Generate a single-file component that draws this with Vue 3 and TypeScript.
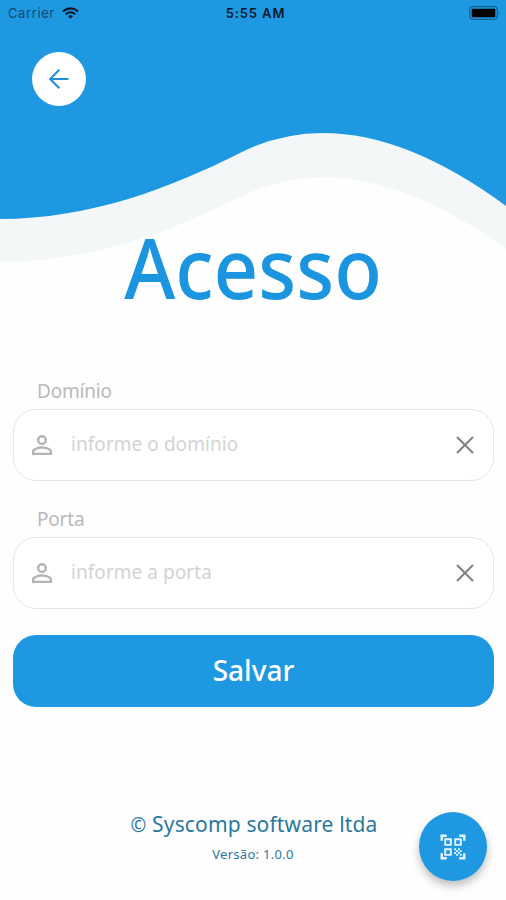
<script setup lang="ts">
import { ref } from 'vue'

interface Field {
  id: string
  label: string
  placeholder: string
}

const fields: Field[] = [
  { id: 'dominio', label: 'Domínio', placeholder: 'informe o domínio' },
  { id: 'porta', label: 'Porta', placeholder: 'informe a porta' },
]
const values = ref<Record<string, string>>({ dominio: '', porta: '' })
</script>

<template>
  <main class="screen">
    <svg class="wave" width="506" height="270" viewBox="0 0 506 270" aria-hidden="true">
      <path fill="#f3f7f8" d="M0 0H506V249Q356 140 240 197C170 232 90 262 0 262Z" />
      <path fill="#1f98e2" d="M0 0H506V206Q355 95 240 153C170 188 90 219 0 219Z" />
    </svg>

    <header class="status">
      <div class="carrier">
        <span>Carrier</span>
        <svg width="17" height="12" viewBox="0 0 17 12" fill="none" stroke="#07192a" stroke-width="2">
          <path d="M1 4.400Q8.500-1.700 16 4.400" />
          <path d="M3.700 7.200Q8.500 3.300 13.300 7.200" />
          <path d="M8.500 11.700L6 9.200Q8.500 7.300 11 9.200Z" fill="#07192a" stroke="none" />
        </svg>
      </div>
      <span class="time">5:55 AM</span>
      <svg class="battery" width="32" height="14" viewBox="0 0 32 14">
        <rect x=".7" y=".7" width="27.600" height="12.600" rx="3.200" fill="none" stroke="#14608f" stroke-width="1.200" />
        <rect x="2.700" y="2.700" width="23.600" height="8.600" rx="1" fill="#000" />
        <path d="M29.700 5Q31.300 7 29.700 9Z" fill="#14608f" />
      </svg>
    </header>

    <button class="back" aria-label="Voltar">
      <svg width="28" height="28" viewBox="0 0 28 28" fill="none" stroke="#1f8fd6" stroke-width="2">
        <path d="M23.500 14H5.500M14.300 4.800L5.100 14L14.300 23.200" />
      </svg>
    </button>

    <h1 class="title">Acesso</h1>

    <form class="form" @submit.prevent>
      <div v-for="f in fields" :key="f.id" class="group">
        <label class="label" :for="f.id">{{ f.label }}</label>
        <div class="field">
          <svg width="30" height="30" viewBox="0 0 24 24" fill="#b5b5b5">
            <path d="M12 5.900a2.100 2.100 0 1 1 0 4.200 2.100 2.100 0 0 1 0-4.200m0 9c2.970 0 6.100 1.460 6.100 2.100v1.100H5.900V17c0-.64 3.130-2.100 6.100-2.100M12 4C9.790 4 8 5.790 8 8s1.790 4 4 4 4-1.790 4-4-1.790-4-4-4zm0 9c-2.670 0-8 1.340-8 4v3h16v-3c0-2.660-5.330-4-8-4z" />
          </svg>
          <input :id="f.id" v-model="values[f.id]" class="input" :placeholder="f.placeholder" />
          <svg class="clear" width="18" height="18" viewBox="0 0 18 18" stroke="#808080" stroke-width="2" @click="values[f.id] = ''">
            <path d="M1 1L17 17M17 1L1 17" />
          </svg>
        </div>
      </div>
      <button class="save" type="submit">Salvar</button>
    </form>

    <footer class="footer">
      <p class="company"><span class="copy">©</span> Syscomp software ltda</p>
      <p class="version">Versão: 1.0.0</p>
    </footer>

    <button class="fab" aria-label="QR">
      <svg width="30" height="30" viewBox="0 0 24 24" fill="#e6f4fd">
        <path d="M9.500 6.500v3h-3v-3h3M11 5H5v6h6V5zm-1.500 9.500v3h-3v-3h3M11 13H5v6h6v-6zm6.500-6.500v3h-3v-3h3M19 5h-6v6h6V5zm-6 8h1.500v1.500H13V13zm1.500 1.500H16V16h-1.500v-1.500zM16 13h1.500v1.500H16V13zm-3 3h1.500v1.500H13V16zm1.500 1.500H16V19h-1.500v-1.500zM16 16h1.500v1.500H16V16zm1.500-1.500H19V16h-1.500v-1.500zm0 3H19V19h-1.500v-1.500zM22 7h-2V4h-3V2h5v5zm0 15v-5h-2v3h-3v2h5zM2 22h5v-2H4v-3H2v5zM2 2v5h2V4h3V2H2z" />
      </svg>
    </button>
  </main>
</template>

<style>
body {
  margin: 0;
  background: #fff;
}
</style>

<style scoped>
.screen {
  position: relative;
  box-sizing: border-box;
  width: 506px;
  height: 900px;
  overflow: hidden;
  background: #fefefe;
  font-family: "Noto Sans", "Open Sans", sans-serif;
}
.wave {
  position: absolute;
  top: 0;
  left: 0;
}
button {
  border: 0;
  padding: 0;
  font-family: inherit;
}
.status {
  position: relative;
  display: grid;
  grid-template-columns: 1fr auto 1fr;
  align-items: center;
  height: 26px;
  padding: 0 5px 0 8px;
  font-family: Inter, "Liberation Sans", sans-serif;
  font-size: 13px;
  color: #07192a;
}
.carrier {
  display: flex;
  align-items: center;
  gap: 7px;
  color: #14496f;
  letter-spacing: 0.6px;
}
.time {
  font-weight: 600;
  letter-spacing: 0.9px;
  padding-left: 2px;
}
.battery {
  justify-self: end;
}
.back {
  position: relative;
  display: flex;
  align-items: center;
  justify-content: center;
  width: 54px;
  height: 54px;
  margin: 26px 0 0 32px;
  border-radius: 50%;
  background: #fff;
}
.title {
  position: relative;
  margin: 111px 0 0;
  height: 100px;
  line-height: 100px;
  text-align: center;
  font-size: 83px;
  font-weight: 500;
  color: #1b95e0;
  transform: scaleX(0.94);
}
.form {
  display: flex;
  flex-direction: column;
  padding: 61px 12px 0 13px;
}
.group {
  height: 128px;
}
.label {
  display: block;
  height: 31px;
  line-height: 26px;
  padding-left: 24px;
  font-size: 19px;
  letter-spacing: -0.2px;
  color: #b9b9b9;
}
.field {
  box-sizing: border-box;
  display: flex;
  align-items: center;
  height: 72px;
  padding: 0 19px 0 13px;
  border: 1.500px solid #e5e5e5;
  border-radius: 23px;
  background: #fff;
}
.input {
  flex: 1;
  min-width: 0;
  margin-left: 14px;
  padding: 0 0 3px;
  border: 0;
  outline: 0;
  background: none;
  font-family: inherit;
  font-size: 19px;
  letter-spacing: 0.05px;
}
.input::placeholder {
  color: #d3d3d3;
  opacity: 1;
}
.save {
  height: 72px;
  margin-top: 1px;
  padding-bottom: 2px;
  border-radius: 23px;
  background: #1f98e2;
  color: #fff;
  font-size: 28px;
  font-weight: 500;
}
.footer {
  padding-top: 101px;
  text-align: center;
  color: #2b789f;
}
.footer p {
  margin: 0;
}
.company {
  height: 32px;
  line-height: 32px;
  padding-left: 2px;
  font-size: 21px;
  letter-spacing: 0.15px;
}
.copy {
  font-size: 19px;
}
.version {
  height: 24px;
  line-height: 28px;
  font-size: 13px;
  letter-spacing: 0.3px;
}
.fab {
  position: absolute;
  left: 419px;
  top: 812px;
  display: flex;
  align-items: center;
  justify-content: center;
  width: 68px;
  height: 69px;
  border-radius: 50%;
  background: #1f98e2;
  box-shadow: 0 5px 8px rgba(0, 0, 0, 0.25);
}
</style>
